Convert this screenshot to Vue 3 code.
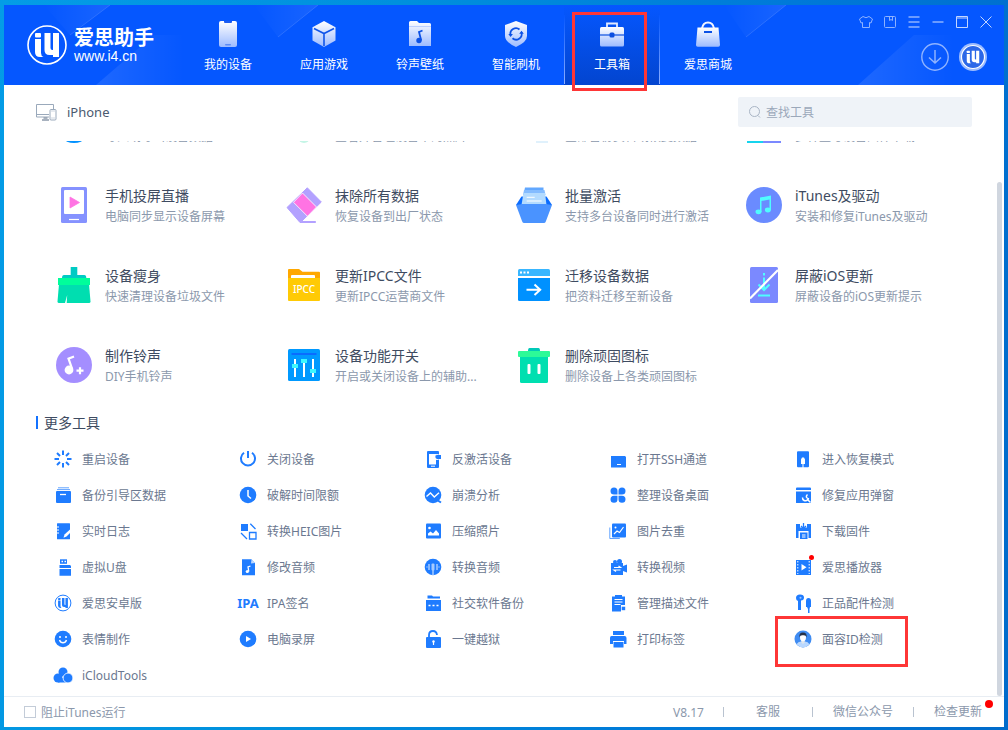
<script setup>
import { onMounted, ref } from 'vue'

const navItems = [
  {
    label: '我的设备',
    icon: '<rect x="5" y="1" width="18" height="26" rx="2" fill="url(#nav-fill)"/><path d="M10 1h8v1q0 1-1 1h-6q-1 0-1-1z" fill="#1c5cf0"/><rect x="11" y="24" width="6" height="1.6" rx=".8" fill="#5c8bf5"/>'
  },
  {
    label: '应用游戏',
    icon: '<path d="M14 1l11.5 6.2v13.4L14 27 2.500 20.600V7.200z" fill="url(#nav-fill)"/><path d="M4 8.500l10 5 10-5M14 13.500V26" fill="none" stroke="#1055ea" stroke-width="1.600"/>'
  },
  {
    label: '铃声壁纸',
    icon: '<path d="M3 26V2.500Q3 1 4.500 1H11l2 2h10.500Q25 3 25 4.500V26z" fill="url(#nav-fill)"/><path d="M3 6.500h22" stroke="#bcd0ff"/><circle cx="13" cy="20.500" r="2.700" fill="#0c51e6"/><path d="M16.500 10.500l-3.500 1.500 2 7.500-1 1.500" fill="none" stroke="#0c51e6" stroke-width="1.800"/>'
  },
  {
    label: '智能刷机',
    icon: '<path d="M14 1l11 4v11q0 6-11 11Q3 22 3 16V5z" fill="url(#nav-fill)"/><path d="M8.500 15a5.600 5.600 0 0 1 9-5.500M19.500 12.500a5.600 5.600 0 0 1-9 5.800" fill="none" stroke="#0c51e6" stroke-width="1.800"/><path d="M6.300 14h4.600l-2.300 3zM17.200 13.700h4.600l-2.300-3z" fill="#0c51e6"/>'
  },
  {
    label: '工具箱',
    active: true,
    icon: '<path d="M9 8V3.500h10V8" fill="none" stroke="#e3ebff" stroke-width="1.800"/><rect x="2" y="7" width="24" height="19.500" rx="1.500" fill="url(#nav-fill)"/><path d="M2 15h24" stroke="#0c4fe0" stroke-width="1.200"/><rect x="11.500" y="12.500" width="5" height="5" rx="1.500" fill="#0c4fe0"/>'
  },
  {
    label: '爱思商城',
    icon: '<path d="M8 8.500q1-6 6-6t6 6" fill="none" stroke="#f0f4ff" stroke-width="2"/><path d="M3.500 7.500h21L26 25q0 1.700-1.700 1.700H3.700Q2 26.700 2 25z" fill="url(#nav-fill)"/><rect x="10" y="11" width="8" height="2" fill="#0c51e6"/>'
  }
]

const emblem = '<rect x="8" y="8" width="6" height="4.500" rx="1"/><path d="M8 14h6v14q0 3 2.500 4H13q-5 0-5-5z"/><path d="M17.500 8h6v15q0 2 2 2H26V8h6v24h-6v-2h-3.500q-5 0-5-5z"/>'

const windowButtons = [
  { label: '皮肤', icon: '<path d="M5 2.500L1.500 5l1.500 4 1.500-.5v5h7v-5L13 9l1.500-4L11 2.500Q8 5 5 2.500z"/>' },
  { label: '收藏', icon: '<rect x="2.500" y="2.500" width="11" height="11" rx="1"/><path d="M7.500 2.500v4L9 5.500l1.500 1v-4"/>' },
  { label: '菜单', icon: '<path d="M2.500 3h11M2.500 8h11M2.500 13h11" stroke-width="1.500"/>' },
  { label: '最小化', icon: '<path d="M2.500 8h11" stroke-width="1.500"/>' },
  { label: '最大化', bright: true, icon: '<path d="M2.500 2.500h11v11h-11zM2.500 4h11"/>' },
  { label: '关闭', bright: true, icon: '<path d="M2.500 2.500l11 11M13.500 2.500l-11 11"/>' }
]

const tools = [
  { title: '数据迁移', desc: '导入或导出设备数据', icon: '<circle cx="18" cy="18" r="18" fill="#0091ff"/>' },
  { title: '照片管理', desc: '查看并管理设备中的照片', icon: '<ellipse cx="18" cy="30" rx="6" ry="6" fill="#c4f5e6"/>' },
  { title: '备份恢复', desc: '全部备份资料或恢复数据', icon: '<path d="M20 20h12v16H20z" fill="#e0f1fc"/>' },
  { title: '固件下载', desc: '多种型号设备固件下载', icon: '<path d="M1 2h16v34H1z" fill="#16d4ee"/><path d="M17 2h18v34H17z" fill="#7b89ff"/>' },
  {
    title: '手机投屏直播', desc: '电脑同步显示设备屏幕',
    icon: '<rect x="5" width="26" height="36" rx="1.500" fill="#8592ff"/><rect x="8" y="3" width="20" height="24" rx="1" fill="#fff"/><path d="M14 10l9.500 5.500L14 21z" fill="#ff73e3" stroke="#ff73e3" stroke-linejoin="round" stroke-width=".8"/><path d="M13 32.500h10" stroke="#fff" stroke-width="1.200"/>'
  },
  {
    title: '抹除所有数据', desc: '恢复设备到出厂状态',
    icon: '<path d="M21.300.8L35.300 15 15.500 34.500h14V34.500v1H14L1 20.500z" fill="#b3a1ff" stroke="#b3a1ff" stroke-linejoin="round"/><path d="M16.500 6l14 14-9 9.300-14-14z" fill="#ff73e3" stroke="#fff" stroke-width=".8"/>'
  },
  {
    title: '批量激活', desc: '支持多台设备同时进行激活',
    icon: '<path d="M5.500 9.500h25L36 18H0z" fill="#0a6cff"/><path d="M9 .5h18.500V5H8z" fill="#62a8ff"/><path d="M8 3h20.500l1 5H7z" fill="#84bcff"/><path d="M7.500 6h21.500l1.500 12H5.500z" fill="#b3dbff"/><path d="M0 18l6.500-1h23l6.500 1-6.200 16.500q-.5 1.500-2 1.500H8.200q-1.500 0-2-1.500z" fill="#4a93ff"/><path d="M10.700 10.300h8M10.700 14h15" stroke="#fff"/>'
  },
  {
    title: 'iTunes及驱动', desc: '安装和修复iTunes及驱动',
    icon: '<circle cx="18" cy="18" r="18" fill="#6a8bff"/><g fill="#4ffcff"><ellipse cx="12.500" cy="24.800" rx="3" ry="2.400"/><ellipse cx="21.900" cy="23" rx="3" ry="2.400"/><path d="M14 10.500l11-2v14.500h-1.500V12.500l-8 1.500v11H14z"/></g>'
  },
  {
    title: '设备瘦身', desc: '快速清理设备垃圾文件',
    icon: '<path d="M14.700 0h6.600v8h7q2 0 2 3H6q0-3 2-3h6.700z" fill="#00cbc4"/><path d="M3 17h30l1.500 17.500q0 1.500-1.500 1.500H3q-1.500 0-1.500-1.500z" fill="#00deb0"/><path d="M2 11h32v7H2z" fill="#00fe9b"/><path d="M11.200 28l-.5 8H9z" fill="#fff"/>'
  },
  {
    title: '更新IPCC文件', desc: '更新IPCC运营商文件',
    icon: '<path d="M2 12V3q0-1 1-1h10l3.500 2.700H33q1 0 1 1V12z" fill="#ffa800"/><rect x="5" y="8" width="24" height="5" rx="1" fill="#fff"/><path d="M2 11h32v22q0 1-1 1H3q-1 0-1-1z" fill="#ffca05"/><text x="18" y="26" text-anchor="middle" font-size="10" font-weight="500" fill="#fff">IPCC</text>'
  },
  {
    title: '迁移设备数据', desc: '把资料迁移至新设备',
    icon: '<path d="M2 9V3.500Q2 2 3.500 2h29Q34 2 34 3.500V9z" fill="#38b6ff"/><path d="M2 11h32v21.500q0 1.500-1.500 1.500h-29Q2 34 2 32.500z" fill="#0091ff"/><path d="M4 4.500h2v2H4zM7.500 4.500h2v2h-2zM11 4.500h2v2h-2z" fill="#fff"/><path d="M10.500 22.700h13.500M18.500 17.500l5.700 5.200-5.700 5.200" fill="none" stroke="#fff" stroke-width="2"/>'
  },
  {
    title: '屏蔽iOS更新', desc: '屏蔽设备的iOS更新提示',
    icon: '<rect x="4" width="28" height="36" rx="1.500" fill="#7b89ff"/><path d="M18 6v2.500M18 10.500V23M12.500 17.500L18 23l5.500-5.500M12 28.500h12" fill="none" stroke="#4ffcff" stroke-width="2"/><path d="M4 31.500L32 3" stroke="#fff" stroke-width="2.200"/>'
  },
  {
    title: '制作铃声', desc: 'DIY手机铃声',
    icon: '<circle cx="18" cy="18" r="18" fill="#a48eff"/><circle cx="13" cy="23" r="4.400" fill="#fff"/><path d="M18 9.500l-5.500 2.200L16.200 22M20.500 23.700h7M24 20.200v7" fill="none" stroke="#fff" stroke-width="2.200"/>'
  },
  {
    title: '设备功能开关', desc: '开启或关闭设备上的辅助...',
    icon: '<rect x="2" y="2" width="32" height="32" rx="1.500" fill="#0099ff"/><path d="M5.500 7h25" stroke="#0a6cff" stroke-width="2"/><path d="M9 12v18M18 12v18M27 12v18" stroke="#fff" stroke-width="2"/><path d="M6 17h6v4H6zM15 12h6v4h-6zM24 22h6v4h-6z" fill="#3ff8ff"/>'
  },
  {
    title: '删除顽固图标', desc: '删除设备上各类顽固图标',
    icon: '<path d="M12 4q0-3 1.500-3h9Q24 1 24 4z" fill="#00c9b8"/><path d="M4 9h28v25.500q0 1.500-1.500 1.500h-25Q4 36 4 34.500z" fill="#00dfb0"/><rect x="2" y="4" width="32" height="6" rx="1" fill="#2dfa98"/><rect x="11.500" y="17" width="3" height="10" rx="1" fill="#fff"/><rect x="21.500" y="17" width="3" height="10" rx="1" fill="#fff"/>'
  }
]

const ln = 'fill="none" stroke="currentColor"'
const wl = 'fill="none" stroke="#fff"'

const moreTools = [
  { label: '重启设备', icon: `<path d="M9 .5v4.500M9 13v4.500M.5 9H5M13 9h4.500M3 3l3 3M12 12l3 3M15 3l-3 3M6 12l-3 3" ${ln} stroke-width="2"/>` },
  { label: '关闭设备', icon: `<path d="M5 2.800a7 7 0 1 0 8 0M9 1v7" ${ln} stroke-width="2"/>` },
  { label: '反激活设备', icon: `<rect x="3" y="1" width="12" height="17" rx="1"/><path d="M5 4h7v10.500H5z" fill="#fff"/><circle cx="13" cy="7" r="3" fill="#fff"/><path d="M11.500 5.500l1.500-.5h4v4h-4q-2-.5-1.500-3.500z"/><path d="M7 16.200h4" ${wl}/>` },
  { label: '打开SSH通道', icon: `<path d="M2 6h14l1 1v10q0 .5-.5.500h-14q-.5 0-.5-.5z"/><path d="M8 14.500h4" ${wl}/>` },
  { label: '进入恢复模式', icon: `<path d="M4 1.300h10q1 0 1 1v14q0 1-1 1H4q-1 0-1-1v-14q0-1 1-1z"/><path d="M7 14V9.500l1-2h2l1 2V14zM8.500 14h1v4h-1z" fill="#fff"/>` },
  { label: '备份引导区数据', icon: `<path d="M4 1.800h11M3 3.600h13" ${ln} opacity=".7"/><rect x="2" y="5" width="15" height="12" rx="1"/><path d="M6 8.500h6" ${wl} stroke-width="1.300"/>` },
  { label: '破解时间限额', icon: `<circle cx="9" cy="9" r="8.300"/><path d="M9 4v6l3 2.500" ${wl} stroke-width="1.500"/>` },
  { label: '崩溃分析', icon: `<circle cx="9" cy="9" r="8.300"/><path d="M13 14l4 2.500" ${ln} stroke-width="2"/><path d="M2.500 10.500L6.500 7l3.800 4L15 6.800" ${wl} stroke-width="1.400"/>` },
  { label: '整理设备桌面', icon: '<path d="M5 1.500q3.500 0 3.500 3.500v3.500H5Q1.500 8.500 1.500 5T5 1.500zM13 1.500Q9.500 1.500 9.500 5v3.500H13q3.500 0 3.500-3.500T13 1.500zM5 16.700q3.500 0 3.500-3.500V9.700H5q-3.500 0-3.500 3.500T5 16.700zM13 16.700q-3.500 0-3.500-3.500V9.700H13q3.500 0 3.500 3.500t-3.500 3.500z"/>' },
  { label: '修复应用弹窗', icon: `<path d="M2 4V2.500q0-1 1-1h13q1 0 1 1V4zM2 5.500h15v11q0 .5-.5.500h-14q-.5 0-.5-.5z"/><path d="M8.500 11.500a3 3 0 0 0 5 2.500M13.500 8.500q-3 3 1.500 4.500M13 13l3.500 3.500" ${wl} stroke-width="1.500"/>` },
  { label: '实时日志', icon: `<path d="M3.500 1.300h12q.5 0 .5.500v15q0 .5-.5.500h-12q-.5 0-.5-.5v-15q0-.5.500-.5z"/><path d="M2 5h3M2 8h3M2 11h3" ${wl}/><path d="M9.500 15.800l1-3.300 5.500-5 1.500 2-5 5z" fill="#fff"/>` },
  { label: '转换HEIC图片', icon: `<path d="M2 2h7v7H2z"/><path d="M10.500 10.500h6.500v6.500h-6.500zM11.300 1.700L16.500 7M2 11l6 6" ${ln} stroke-width="1.300"/>` },
  { label: '压缩照片', icon: `<rect x="2" y="1.500" width="15" height="15" rx="1"/><circle cx="5.500" cy="6" r="1.300" fill="#fff"/><path d="M4 13.500v-2l2.500-2 2.500 2L12 8l3 3.500v2z" fill="#fff"/>` },
  { label: '图片去重', icon: `<path d="M.8 5.500v11h10" ${ln} opacity=".7"/><rect x="3" y="1.500" width="14" height="14" rx="1"/><circle cx="6.500" cy="5.500" r="1" fill="#fff"/><path d="M5 12l3-3 2.500 1.500L14.500 5" ${wl} stroke-width="1.200"/>` },
  { label: '下载固件', icon: `<path d="M2 2h4v3.500H13V2h4v14h-2.500V9h-10v7H2z"/><path d="M9.500 1v4.500M7 4l2.500 2.500L12 4" ${ln} stroke-width="1.300"/><path d="M6 10.500h7.500V17H6z"/><path d="M8 13h3.500M8 15h3.500" ${wl}/>` },
  { label: '虚拟U盘', icon: `<path d="M6 1.300h7v4.500H6z"/><path d="M5.500 7h10.500l1 1v2H5.500zM5.500 11H17v6.700H5.500z"/><path d="M7.500 3.500h1.500M10.500 3.500h1.500" ${wl} stroke-width="1.300"/>` },
  { label: '修改音频', icon: `<path d="M3 1.300h9.500L16 5v12.300H3z"/><path d="M12.500 1.300L12 5.500l4-.5z" fill="#fff" opacity=".7"/><circle cx="8.300" cy="13.500" r="1.600" fill="#fff"/><path d="M11.500 8l-2.500 1 .8 4.500" ${wl} stroke-width="1.300"/>` },
  { label: '转换音频', icon: `<circle cx="9" cy="9" r="8.300"/><g opacity=".6"><rect x="7.500" y="5.500" width="3" height="7" rx="1" fill="#fff"/><path d="M5 6v6M13 6v6M9 12v5M2.500 9h1M14.500 9h1" ${wl} stroke-width="1.500"/></g>` },
  { label: '转换视频', icon: `<circle cx="6" cy="4" r="2"/><circle cx="10.500" cy="3.500" r="2.500"/><path d="M2 5h12v3l4-1.500v8L14 13v4H2z"/><path d="M5 9.500h6.500L9.500 8M11.500 12H5l2 1.500" ${wl} stroke-width="1.200"/>` },
  { label: '爱思播放器', dot: true, icon: `<path d="M2 2h15v15H2z"/><path d="M3.800 3v13M15.200 3v13" ${wl} stroke-dasharray="1.500 1.500"/><path d="M7.500 6l5 3.300-5 3.200z" fill="#fff"/>` },
  { label: '爱思安卓版', icon: `<circle cx="9" cy="9" r="7.900" ${ln} stroke-width="1"/><g transform="translate(.8 .8) scale(.41)">${emblem}</g>` },
  { label: 'IPA签名', icon: '<text x="9" y="14" text-anchor="middle" font-size="13" font-weight="700">IPA</text>' },
  { label: '社交软件备份', icon: `<path d="M3.500 4.500V1.500H8l1 1h7v2zM2 6h15v11H2z"/><path d="M4.500 11.500h2M8.500 11.500h2M12.500 11.500h2" ${wl} stroke-width="1.500"/>` },
  { label: '管理描述文件', icon: `<path d="M3 2.500h3V1h7v1.500h3V11h-4v6.500H3z"/><path d="M5.500 5.500h8M5.500 8h8M5.500 10.500h6" ${wl}/><path d="M12.700 12.700h3.500v3.500h-3.500z"/>` },
  { label: '正品配件检测', icon: `<path d="M2 4q0-3.500 4-3.500t4 3-3 3V16H4V7Q2 6.500 2 4zM12 7q0-3 2.500-3T17 7v6h-1l-.5 2v4h-1.500v-4L13 13h-1z"/><circle cx="6.500" cy="3.700" r="1" fill="#9cc5ff"/>` },
  { label: '表情制作', icon: `<circle cx="9" cy="9" r="8.300"/><circle cx="6" cy="7" r="1" fill="#fff"/><circle cx="12" cy="7" r="1" fill="#fff"/><path d="M5.500 10q1 2.800 3.500 2.800t3.500-2.800" ${wl} stroke-width="1.400"/>` },
  { label: '电脑录屏', icon: '<circle cx="9" cy="9" r="8.300"/><path d="M7 6l5 3-5 3z" fill="#fff"/>' },
  { label: '一键越狱', icon: `<path d="M5 8V5q0-4 4-4 3.500 0 4 4" ${ln} stroke-width="1.800"/><rect x="2" y="7" width="15" height="11" rx="1"/><circle cx="9.500" cy="11.500" r="1.200" fill="#fff"/><path d="M9.500 12v3" ${wl} stroke-width="1.200"/>` },
  { label: '打印标签', icon: '<path d="M4 1h11v4H4zM2.500 6h13q2 0 2 2v6H15v-3H4v3H1V8q0-2 1.500-2zM4.500 12h10v5.500h-10z"/>' },
  { label: '面容ID检测', marked: true, icon: '<circle cx="9" cy="9" r="8.500" fill="#3f8cf2"/><path d="M2.500 14.300Q4 11.500 7 11.500h4q3 0 4.500 2.800A8.500 8.500 0 0 1 2.500 14.300z" fill="#b9d8ff"/><path d="M7.300 9h3.400v3.500L9 14l-1.700-1.500z" fill="#dfe6ee"/><ellipse cx="9" cy="7.500" rx="3" ry="3.800" fill="#fff"/><path d="M5.500 7.500Q4.700 2.500 9 2.500t3.500 5Q12.300 4.800 9 5.200 5.700 4.800 5.500 7.500z" fill="#263248"/>' },
  { label: 'iCloudTools', icon: '<circle cx="9" cy="6" r="4.500"/><circle cx="4" cy="12" r="4.500"/><path d="M4 12h10v4.500H4z"/><circle cx="14" cy="12" r="4.900" stroke="#fff" stroke-width=".8"/>' }
]

const footerLinks = ['客服', '微信公众号', '检查更新']

const query = ref('')
const blockItunes = ref(false)
const scroller = ref(null)

onMounted(() => {
  scroller.value.scrollTop = scroller.value.scrollHeight
})
</script>

<template>
  <div class="desktop">
    <div class="window">
      <header class="header">
        <svg class="rays rays-left" width="400" height="80" aria-hidden="true">
          <defs>
            <linearGradient id="nav-fill" x1="0" y1="0" x2="0" y2="1">
              <stop offset="0" stop-color="#fff" />
              <stop offset="1" stop-color="#9dbbff" />
            </linearGradient>
            <linearGradient id="ray-low" x1="0" y1="1" x2="1" y2="1">
              <stop offset="0" stop-color="#fff" stop-opacity=".1" />
              <stop offset="1" stop-color="#fff" stop-opacity="0" />
            </linearGradient>
            <linearGradient id="ray-high" x1="1" y1="0" x2="0" y2="0">
              <stop offset="0" stop-color="#fff" stop-opacity=".08" />
              <stop offset="1" stop-color="#fff" stop-opacity="0" />
            </linearGradient>
          </defs>
          <path d="M40 0h66L66 30z" fill="url(#ray-high)" />
          <path d="M106 0L66 30" stroke="#5d92ff" stroke-opacity=".4" />
          <path d="M92 80L150 30h30v50z" fill="url(#ray-low)" />
          <path d="M250 0h64L274 32z" fill="url(#ray-high)" />
          <path d="M314 0L274 32" stroke="#5d92ff" stroke-opacity=".4" />
        </svg>
        <svg class="rays rays-right" width="300" height="80" aria-hidden="true">
          <path d="M20 0h62L42 32z" fill="url(#ray-high)" />
          <path d="M82 0L42 32" stroke="#5d92ff" stroke-opacity=".4" />
          <path d="M154 80L210 30h40v50z" fill="url(#ray-low)" />
        </svg>

        <div class="brand">
          <svg class="brand-mark" viewBox="0 0 40 40" aria-hidden="true">
            <circle cx="20" cy="20" r="19" fill="none" stroke="#fff" stroke-width="1.600" />
            <g fill="#fff" v-html="emblem"></g>
          </svg>
          <div class="brand-text">
            <strong>爱思助手</strong>
            <span>www.i4.cn</span>
          </div>
        </div>

        <nav class="nav">
          <button v-for="item in navItems" :key="item.label" type="button" class="nav-item" :class="{ active: item.active }">
            <svg class="nav-icon" viewBox="0 0 28 28" aria-hidden="true" v-html="item.icon"></svg>
            <span>{{ item.label }}</span>
            <i v-if="item.active" class="mark mark-nav"></i>
          </button>
        </nav>

        <div class="controls">
          <div class="window-buttons">
            <button v-for="b in windowButtons" :key="b.label" type="button" :aria-label="b.label" :class="{ bright: b.bright }">
              <svg viewBox="0 0 16 16" v-html="b.icon"></svg>
            </button>
          </div>
          <div class="round-buttons">
            <button type="button" aria-label="下载">
              <svg viewBox="0 0 28 28">
                <circle cx="14" cy="14" r="13.200" fill="none" stroke="#8fb3ff" stroke-width="1.400" />
                <path d="M14 7v13M8 14.500l6 5.500 6-5.500" fill="none" stroke="#8fb3ff" stroke-width="1.500" />
              </svg>
            </button>
            <button type="button" aria-label="账户">
              <svg viewBox="0 0 28 28">
                <circle cx="14" cy="14" r="14" fill="#9cbcff" />
                <circle cx="14" cy="14" r="11.500" fill="#2c68e8" stroke="#fff" stroke-width="1.200" />
                <g fill="#fff" transform="translate(3.600 3.600) scale(.52)" v-html="emblem"></g>
              </svg>
            </button>
          </div>
        </div>
      </header>

      <div class="device-bar">
        <div class="device">
          <svg viewBox="0 0 22 18" aria-hidden="true">
            <path d="M13 14H.5V1.500h17V6M.5 11.500H13" fill="none" stroke="#9aa9bb" />
            <path d="M7.500 15h4M6 17h7" stroke="#8c99aa" stroke-width="1.300" />
            <rect x="14" y="6.500" width="6" height="10.500" rx="1" fill="#fff" stroke="#9aa9bb" />
            <path d="M14 8h6M14 15h6" stroke="#cdd5df" />
          </svg>
          <span>iPhone</span>
        </div>
        <label class="search">
          <svg viewBox="0 0 14 14" aria-hidden="true">
            <circle cx="6.500" cy="6.500" r="5" fill="none" stroke="#a9b5c5" />
            <path d="M10 10.500l2 2" stroke="#a9b5c5" />
          </svg>
          <input v-model="query" type="text" placeholder="查找工具" aria-label="查找工具" />
        </label>
      </div>

      <div class="body">
        <main ref="scroller" class="scroller">
          <div class="tools">
            <button v-for="tool in tools" :key="tool.title" type="button" class="tool">
              <svg class="tool-icon" viewBox="0 0 36 36" aria-hidden="true" v-html="tool.icon"></svg>
              <span class="tool-text">
                <span class="tool-title">{{ tool.title }}</span>
                <span class="tool-desc">{{ tool.desc }}</span>
              </span>
            </button>
          </div>
          <h2 class="section">更多工具</h2>
          <div class="more">
            <button v-for="item in moreTools" :key="item.label" type="button" class="more-item">
              <svg class="more-icon" viewBox="0 0 18 18" aria-hidden="true" v-html="item.icon"></svg>
              <span>{{ item.label }}</span>
              <i v-if="item.dot" class="dot"></i>
              <i v-if="item.marked" class="mark mark-more"></i>
            </button>
          </div>
        </main>
        <div class="thumb"></div>
      </div>

      <footer class="footer">
        <label class="block">
          <input v-model="blockItunes" type="checkbox" />
          <span>阻止iTunes运行</span>
        </label>
        <span class="version">V8.17</span>
        <a v-for="link in footerLinks" :key="link" href="#" class="footer-link">{{ link }}</a>
        <i class="update-dot"></i>
      </footer>
    </div>
  </div>
</template>

<style>
body {
  margin: 0;
}
</style>

<style scoped>
.desktop {
  box-sizing: border-box;
  height: 100vh;
  padding: 5px 4px 3px;
  background: linear-gradient(100deg, #049ce6 0%, #0090dd 35%, #0079d8 70%, #006bcb 100%);
  font-family: "Noto Sans", "Noto Sans CJK SC", sans-serif;
  font-size: 12px;
  color: #6b7890;
}

.window {
  display: flex;
  flex-direction: column;
  height: 100%;
  background: #fff;
}

button {
  padding: 0;
  border: 0;
  background: none;
  color: inherit;
  font: inherit;
  text-align: left;
  cursor: pointer;
}

svg {
  display: block;
  flex: none;
}

.header {
  position: relative;
  display: flex;
  flex: none;
  height: 80px;
  background: #0557ff;
  color: #fff;
}

.rays {
  position: absolute;
  top: 0;
}

.rays-left {
  left: 0;
}

.rays-right {
  right: 0;
}

.brand {
  position: relative;
  display: flex;
  align-items: center;
  gap: 7px;
  width: 153px;
  padding-left: 23px;
}

.brand-mark {
  width: 40px;
  height: 40px;
}

.brand-text {
  display: flex;
  flex-direction: column;
}

.brand-text strong {
  font-size: 20px;
  line-height: 22px;
  white-space: nowrap;
}

.brand-text span {
  font-family: "Liberation Sans", Arial, sans-serif;
  font-size: 14px;
  line-height: 14px;
}

.nav {
  position: relative;
  display: flex;
}

.nav-item {
  position: relative;
  display: flex;
  flex-direction: column;
  align-items: center;
  gap: 8px;
  box-sizing: border-box;
  width: 96px;
  padding-top: 15px;
  line-height: 18px;
}

.nav-item.active {
  background: linear-gradient(#0557ff, #0345cf);
}

.nav-item.active::before,
.nav-item.active::after {
  content: "";
  position: absolute;
  top: 10px;
  bottom: 1px;
  width: 1px;
  background: linear-gradient(#0557ff, #8fb0ff);
}

.nav-item.active::before {
  left: 0;
}

.nav-item.active::after {
  right: 0;
}

.nav-icon {
  width: 28px;
  height: 28px;
}

.mark {
  position: absolute;
  border: 3px solid #fe3636;
  z-index: 2;
}

.mark-nav {
  inset: 7px 13px -6px 8px;
}

.controls {
  position: relative;
  margin-left: auto;
  padding-right: 10px;
}

.window-buttons {
  display: flex;
  gap: 8px;
  margin-bottom: 13px;
  padding-top: 9px;
}

.window-buttons button {
  width: 16px;
  height: 16px;
}

.window-buttons svg {
  width: 16px;
  height: 16px;
  fill: none;
  stroke: #8db2ff;
}

.window-buttons .bright svg {
  stroke: #c3d6ff;
}

.round-buttons {
  display: flex;
  justify-content: flex-end;
  gap: 10px;
  padding-right: 7px;
}

.round-buttons svg {
  width: 28px;
  height: 28px;
}

.device-bar {
  display: flex;
  flex: none;
  align-items: center;
  justify-content: space-between;
  box-sizing: border-box;
  height: 56px;
  padding: 0 32px 2px;
}

.device {
  display: flex;
  align-items: center;
  gap: 9px;
  color: #4b5a70;
  font-size: 13px;
  line-height: 18px;
}

.device svg {
  width: 22px;
  height: 18px;
}

.search {
  display: flex;
  align-items: center;
  gap: 4px;
  width: 224px;
  height: 30px;
  padding-left: 10px;
  border-radius: 2px;
  background: #eff3f8;
}

.search svg {
  width: 14px;
  height: 14px;
}

.search input {
  flex: 1;
  min-width: 0;
  padding: 0;
  border: 0;
  outline: 0;
  background: none;
  color: #4b5a70;
  font: inherit;
}

.search input::placeholder {
  color: #9ba8ba;
}

.body {
  position: relative;
  flex: 1;
  min-height: 0;
}

.scroller {
  height: 100%;
  overflow-y: auto;
  scrollbar-width: none;
}

.thumb {
  position: absolute;
  top: 41px;
  right: 2px;
  bottom: 0;
  width: 5px;
  border-radius: 3px;
  background: #d0d6df;
}

.tools {
  display: grid;
  grid-template-columns: repeat(4, 1fr);
  grid-auto-rows: 80px;
  padding: 0 28px 0 52px;
}

.tool {
  display: flex;
  align-items: center;
  gap: 13px;
  white-space: nowrap;
}

.tool-icon {
  width: 36px;
  height: 36px;
}

.tool-text {
  display: flex;
  flex-direction: column;
  padding-top: 3px;
}

.tool-title {
  color: #3e4b61;
  font-size: 14px;
  line-height: 20px;
}

.tool-desc {
  color: #8b98ac;
  line-height: 21px;
}

.section {
  display: flex;
  align-items: center;
  gap: 6px;
  height: 34px;
  margin: 0 0 2px 32px;
  color: #3e4b61;
  font-size: 14px;
  font-weight: 400;
}

.section::before {
  content: "";
  width: 2px;
  height: 13px;
  background: #1372ff;
}

.more {
  display: grid;
  grid-template-columns: repeat(5, 1fr);
  grid-auto-rows: 36px;
  padding: 0 25px 3px 50px;
}

.more-item {
  position: relative;
  display: flex;
  align-items: center;
  gap: 10px;
  white-space: nowrap;
}

.more-icon {
  width: 18px;
  height: 18px;
  overflow: visible;
  color: #1f7cff;
  fill: currentColor;
}

.dot {
  position: absolute;
  top: 6px;
  left: 15px;
  width: 5px;
  height: 5px;
  border-radius: 50%;
  background: #f00;
}

.mark-more {
  inset: -5px 71px -10px -19px;
}

.footer {
  position: relative;
  display: flex;
  flex: none;
  align-items: center;
  height: 30px;
  padding: 0 22px 0 20px;
  border-top: 1px solid #e8edf3;
  color: #8b98ac;
}

.block {
  display: flex;
  align-items: center;
  gap: 5px;
  margin-right: auto;
}

.block input {
  appearance: none;
  box-sizing: border-box;
  width: 12px;
  height: 12px;
  margin: 0;
  border: 1px solid #c3ccd8;
  background: #fff;
}

.block input:checked {
  background: #1f7cff;
}

.version {
  margin-right: 19px;
}

.footer-link {
  padding: 0 20px;
  border-left: 1px solid #b9c3d0;
  color: inherit;
  line-height: 10px;
  text-decoration: none;
}

.footer-link:nth-of-type(1) {
  padding: 0 32px;
}

.footer-link:last-of-type {
  padding-right: 0;
}

.update-dot {
  position: absolute;
  top: 3px;
  right: 11px;
  width: 8px;
  height: 8px;
  border-radius: 50%;
  background: #f00;
}
</style>
